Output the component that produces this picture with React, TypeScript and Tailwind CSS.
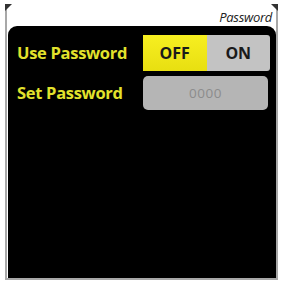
export default function App() {
  return (
    <div className="w-[281px] h-[282px] bg-white pl-[5px] pt-[5px]" style={{ fontFamily: '"Open Sans", "Noto Sans", sans-serif' }}>
      <div className="relative w-[273px] h-[275px] border-x-2 border-b-2 border-[#a8a8a8] flex flex-col">
        {/* corner marks */}
        <div className="absolute -left-[2px] -top-px w-0 h-0 border-t-[7px] border-r-[7px] border-t-[#333] border-r-transparent" />
        <div className="absolute -right-[2px] -top-px w-0 h-0 border-t-[7px] border-l-[7px] border-t-[#333] border-l-transparent" />

        {/* title */}
        <div className="h-[21px] flex items-center justify-end pr-[4px] pt-[4px] bg-white">
          <span className="text-[13px] italic text-[#222] tracking-[-0.3px]">Password</span>
        </div>

        {/* body */}
        <div className="flex-1 bg-black rounded-t-[9px] ml-px pl-[9px] pr-[6px] pt-[9px] flex flex-col gap-[5px]">
          <div className="flex items-center justify-between">
            <span className="text-[16.5px] font-bold text-[#e2e22c] tracking-[-0.3px]">Use Password</span>
            <div className="flex w-[127px] h-[36px] rounded-r-[3px] overflow-hidden">
              <div className="flex-1 bg-gradient-to-b from-[#f7ef20] to-[#e8df10] flex items-center justify-center text-[16px] font-bold text-[#1a1a1a]">
                OFF
              </div>
              <div className="flex-1 bg-[#c3c3c3] flex items-center justify-center text-[16px] font-bold text-[#1a1a1a]">
                ON
              </div>
            </div>
          </div>
          <div className="flex items-center justify-between">
            <span className="text-[16.5px] font-bold text-[#e2e22c] tracking-[-0.3px]">Set Password</span>
            <div className="w-[125px] h-[34px] mr-[2px] rounded-[5px] bg-[#b5b5b5] flex items-center justify-center text-[13.5px] text-[#8c8c8c] tracking-[0.5px]">
              0000
            </div>
          </div>
        </div>
      </div>
    </div>
  );
}
